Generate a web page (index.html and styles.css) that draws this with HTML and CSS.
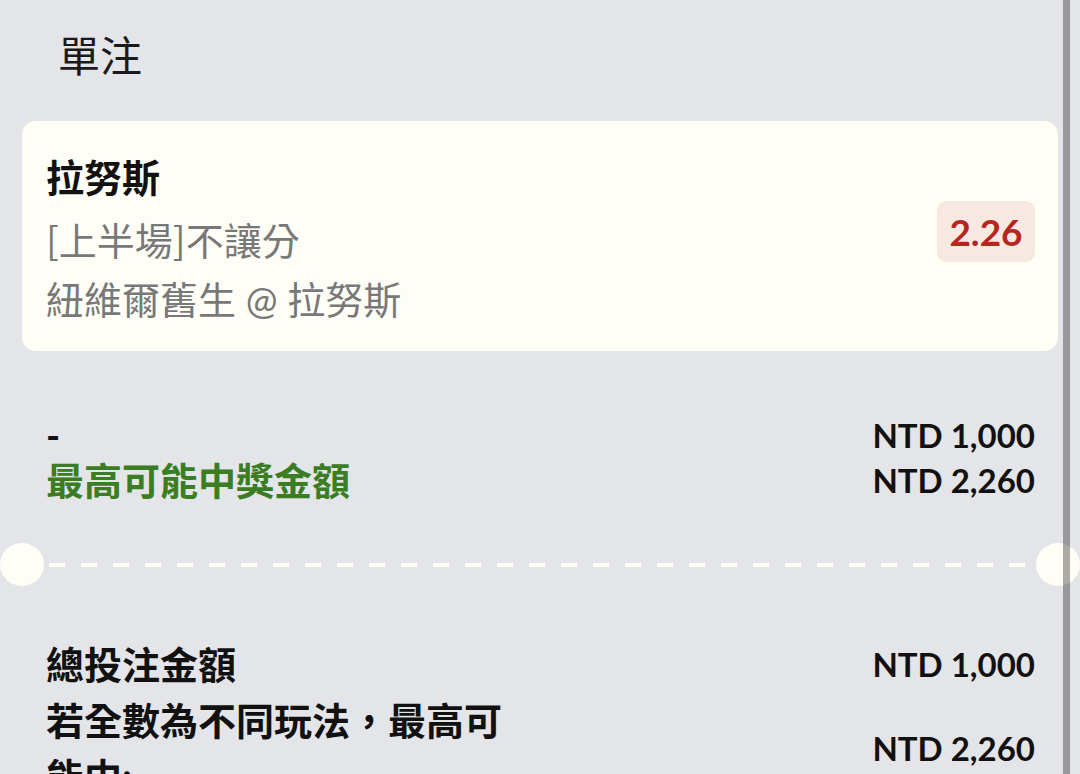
FILE: index.html
```html
<!DOCTYPE html>
<html lang="zh-Hant">
<head>
    <meta charset="UTF-8">
    <meta name="viewport" content="width=device-width, initial-scale=1.0">
    <title>單注</title>
    <link rel="stylesheet" href="styles.css">
</head>
<body>
    <div class="page">
        <h1 class="title">單注</h1>

        <div class="bet-card">
            <div class="bet-info">
                <div class="bet-team">拉努斯</div>
                <div class="bet-market">[上半場]不讓分</div>
                <div class="bet-match">紐維爾舊生 @ 拉努斯</div>
            </div>
            <div class="odds">2.26</div>
        </div>

        <div class="summary">
            <div class="summary-row">
                <span class="label">-</span>
                <span class="amount">NTD 1,000</span>
            </div>
            <div class="summary-row">
                <span class="label win">最高可能中獎金額</span>
                <span class="amount">NTD 2,260</span>
            </div>
        </div>

        <div class="divider">
            <div class="notch"></div>
            <div class="dash-line"></div>
            <div class="notch"></div>
        </div>

        <div class="totals">
            <div class="total-row">
                <span class="label strong">總投注金額</span>
                <span class="amount">NTD 1,000</span>
            </div>
            <div class="total-row">
                <span class="label strong wrap">若全數為不同玩法，最高可能中:</span>
                <span class="amount">NTD 2,260</span>
            </div>
        </div>
    </div>

    <div class="scrollbar"></div>
</body>
</html>
```

FILE: styles.css
```css
* {
    margin: 0;
    padding: 0;
    box-sizing: border-box;
}

html, body {
    height: 100%;
    overflow: hidden;
}

body {
    font-family: Lato, "Noto Sans CJK TC", sans-serif;
    background: #e4e5e8;
    color: #111;
}

.page {
    padding: 24px 22px 0;
}

.title {
    font-family: "Noto Sans CJK TC", sans-serif;
    font-size: 42px;
    font-weight: 400;
    line-height: 60px;
    padding-left: 36px;
    margin-bottom: 37px;
    color: #1a1a1a;
}

/* selected bet */
.bet-card {
    display: flex;
    align-items: center;
    justify-content: space-between;
    background: #fffef6;
    border-radius: 14px;
    padding: 26px 23px 21px 24px;
}

.bet-info {
    font-size: 38px;
    line-height: 61px;
}

.bet-team {
    font-weight: 700;
    color: #111;
}

.bet-market,
.bet-match {
    color: #787878;
}

.bet-market {
    font-family: "Noto Sans CJK TC", sans-serif;
}

.odds {
    background: #f8e8e2;
    color: #b5261f;
    font-weight: 700;
    font-size: 37px;
    line-height: 61px;
    width: 98px;
    text-align: center;
    border-radius: 9px;
    margin-top: -14px;
}

/* summary rows */
.summary {
    margin-top: 62px;
}

.summary-row {
    display: flex;
    justify-content: space-between;
    align-items: center;
    padding: 0 23px 0 24px;
    line-height: 45px;
}

.label {
    font-size: 38px;
    font-weight: 700;
}

.label.win {
    color: #3a7d22;
}

.amount {
    font-size: 33px;
    font-weight: 700;
    color: #111;
}

/* ticket divider */
.divider {
    display: flex;
    align-items: center;
    margin: 40px -22px 0;
}

.notch {
    width: 44px;
    height: 43px;
    border-radius: 50%;
    background: #fffef6;
    flex-shrink: 0;
}

.dash-line {
    flex: 1;
    height: 4px;
    margin: 0 5px;
    background: repeating-linear-gradient(90deg, #fffef6 0 16px, transparent 16px 32px);
}

/* totals */
.totals {
    margin-top: 50px;
}

.total-row {
    display: flex;
    justify-content: space-between;
    align-items: center;
    padding: 0 23px 0 24px;
    line-height: 56px;
}

.label.wrap {
    max-width: 475px;
}

.scrollbar {
    position: fixed;
    top: 0;
    bottom: 0;
    left: 1063px;
    width: 7px;
    background: rgba(0, 0, 0, 0.33);
}
```
